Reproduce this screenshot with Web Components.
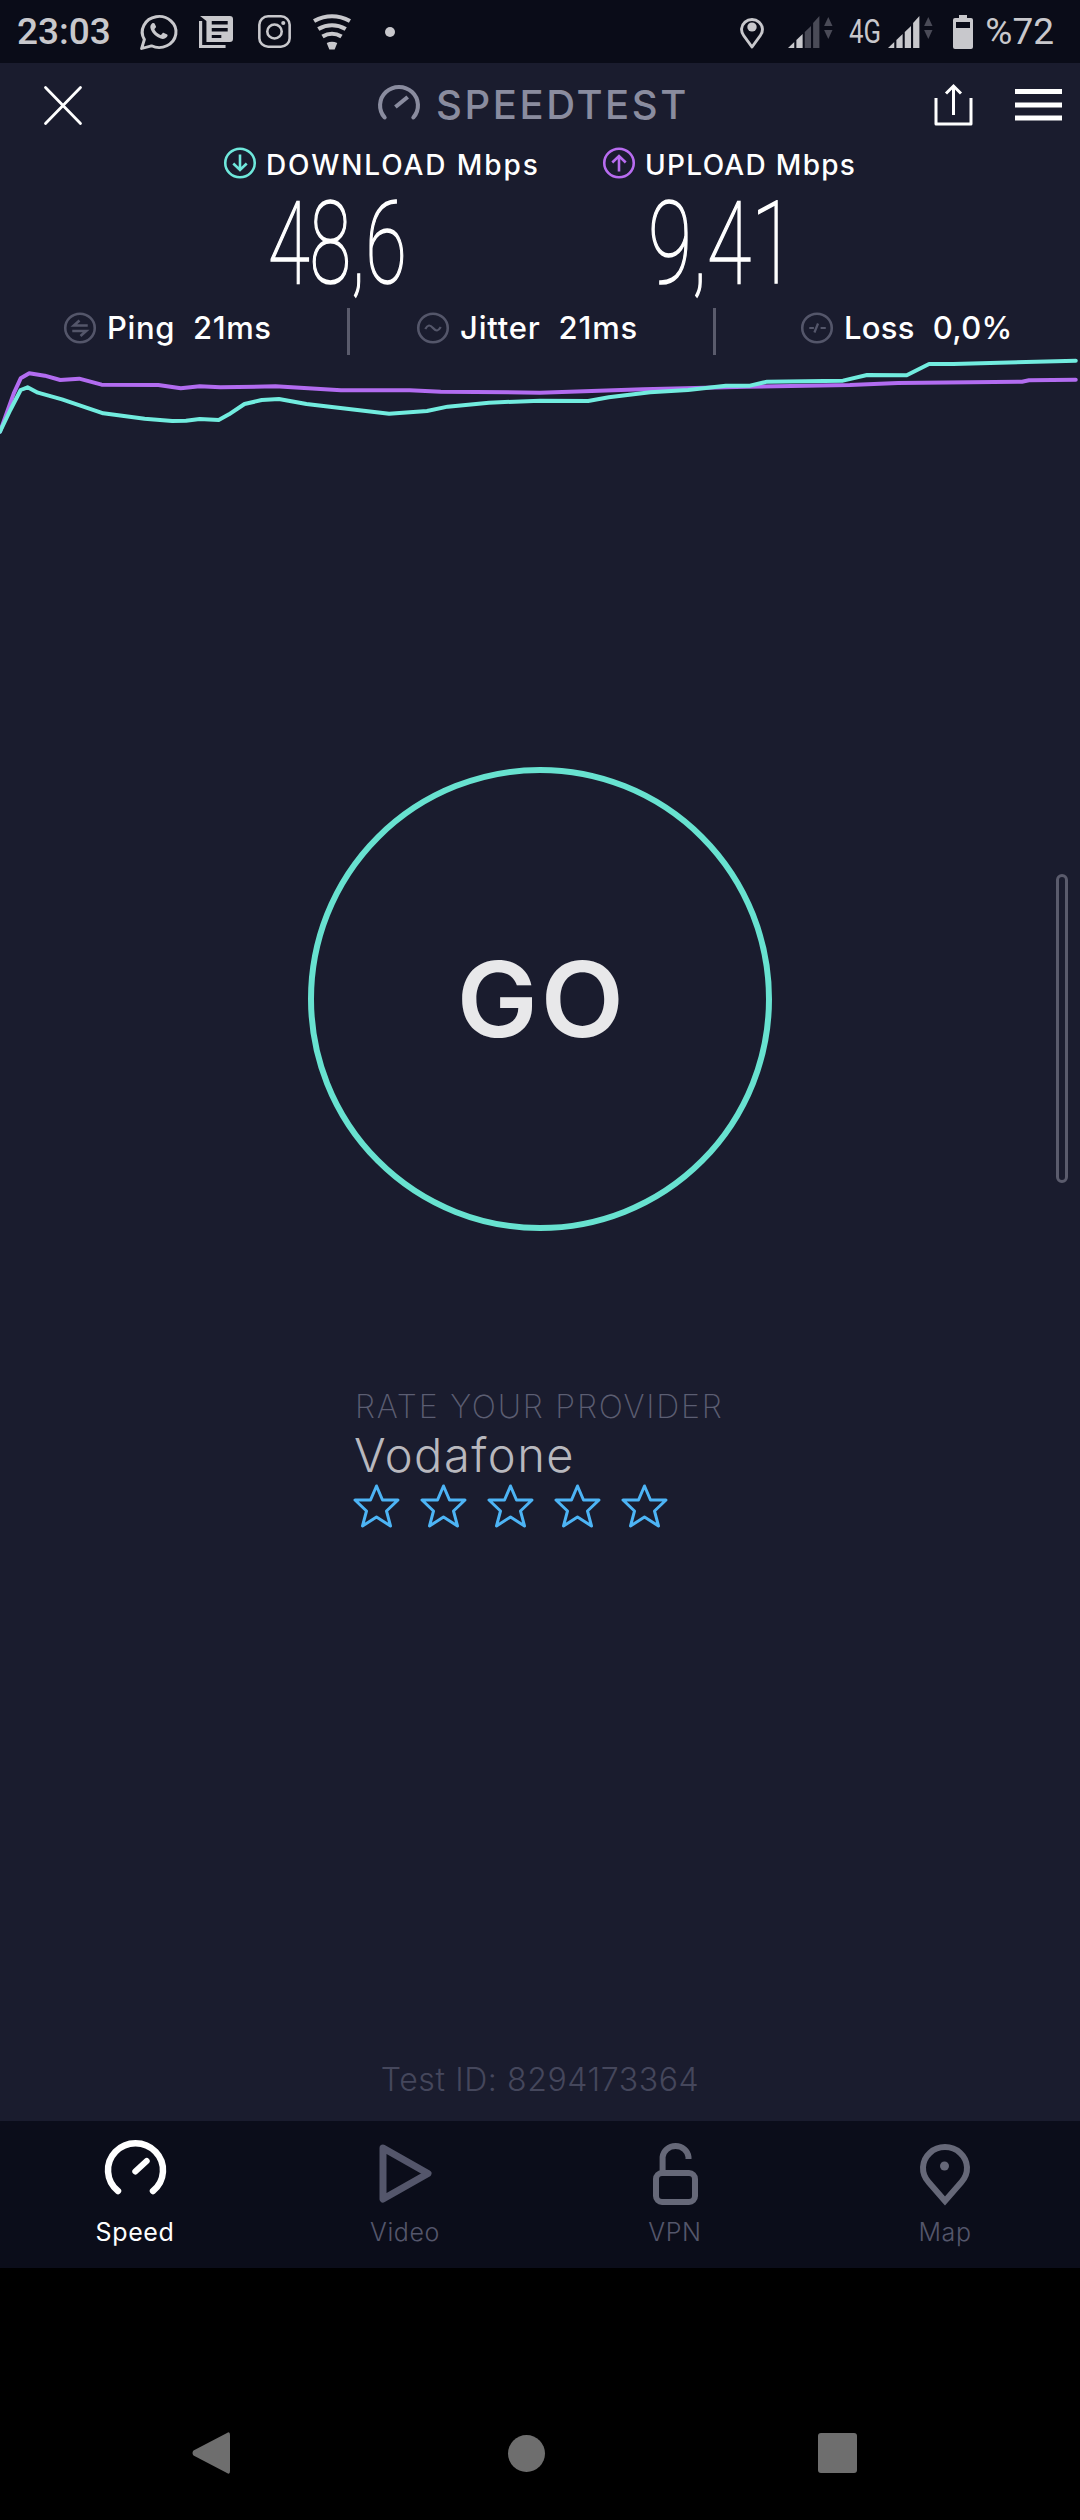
<!DOCTYPE html>
<html>
<head>
<meta charset="utf-8">
<style>
  html, body { margin: 0; background: #000; }
  body {
    width: 1080px;
    height: 2520px;
    overflow: hidden;
    position: relative;
    display: flex;
    flex-direction: column;
    font-family: Inter, "Open Sans", sans-serif;
    color: #fff;
  }
</style>
</head>
<body>
<st-status-bar></st-status-bar>
<st-main>
  <st-nav-header></st-nav-header>
  <st-results></st-results>
  <st-stats>
    <st-stat icon="ping" label="Ping" style="width:350px;padding-left:64px;letter-spacing:.6px">21ms</st-stat>
    <st-stat icon="jitter" label="Jitter" style="width:366px;padding-left:67px;letter-spacing:.8px">21ms</st-stat>
    <st-stat icon="loss" label="Loss" style="width:300px;padding-left:85px;letter-spacing:.3px">0,0%</st-stat>
  </st-stats>
  <st-chart></st-chart>
  <st-go>GO</st-go>
  <st-rating provider="Vodafone"></st-rating>
  <st-test-id>Test ID: 8294173364</st-test-id>
</st-main>
<st-tabbar>
  <st-tab icon="speed" active>Speed</st-tab>
  <st-tab icon="video">Video</st-tab>
  <st-tab icon="vpn">VPN</st-tab>
  <st-tab icon="map">Map</st-tab>
</st-tabbar>
<st-softkeys></st-softkeys>
<st-scroll-thumb></st-scroll-thumb>

<script>
const signal = (rest) => `
  <polygon points="0,33 6,27 6,33" fill="#c8c8cc"/>
  <polygon points="8,33 14,33 14,19 8,25" fill="#c8c8cc"/>
  <polygon points="16,33 22,33 22,11 16,17" fill="${rest}"/>
  <polygon points="24,33 30,33 30,1 24,8" fill="${rest}"/>
  <polygon points="34.500,11 38.500,2 42.500,11" fill="#4a4b57"/>
  <polygon points="34.500,15 42.500,15 38.500,24" fill="#4a4b57"/>`;

// [viewBox w, h, body, drawn width if it differs]
const ICONS = {
  whatsapp: [34, 36, `<path d="M1.500 34.500 L4 25.500 A15.500 15.500 0 1 1 10.500 31.800 Z" fill="none" stroke="#c8c8cc" stroke-width="2.800" stroke-linejoin="round"/>
    <path d="M11 9.500c-1.500 1.500-2 3.200-1 6 1.500 4 5 7.500 9 9 2.500 1 4.500 0 6-2 .5-1 .5-1.500 0-2l-3-1.500c-.5-.2-1-.2-1.300.2l-1.200 1.500c-.3.3-.7.3-1.100.1-2-1-4-2.800-5-5-.2-.4-.1-.7.1-1l1-1.200c.3-.3.3-.7.2-1l-1.300-3c-.3-.7-1.400-.9-2.400-.1z" fill="#c8c8cc"/>`, 37],
  news: [32, 33, `<path d="M1.500 6 V31.500 H25" fill="none" stroke="#c8c8cc" stroke-width="3"/>
    <path d="M1 1 H29 Q32 1 32 4 V24 Q32 27 29 27 H7 V6 Z" fill="#c8c8cc"/>
    <rect x="12" y="6" width="15" height="3.500" fill="#0a0c18"/>
    <rect x="12" y="13" width="15" height="3.500" fill="#0a0c18"/>
    <rect x="12" y="20" width="9" height="3" fill="#0a0c18"/>`, 34],
  instagram: [32, 33, `<rect x="1.300" y="1.300" width="29.400" height="30.400" rx="8.500" fill="none" stroke="#c8c8cc" stroke-width="2.500"/>
    <circle cx="16" cy="16.500" r="7" fill="none" stroke="#c8c8cc" stroke-width="2.500"/>
    <circle cx="24.500" cy="8" r="2" fill="#c8c8cc"/>`, 33],
  wifi: [36, 36, `<g fill="none" stroke="#c8c8cc" stroke-width="4"><path d="M1 7 Q18 -2.500 35 7"/><path d="M5 15 Q18 7.500 31 15"/><path d="M9 22.500 Q18 17 27 22.500"/></g>
    <path d="M13 29 Q18 26.500 23 29 L20.500 35.500 H15.500 Z" fill="#c8c8cc"/>`, 38],
  dot: [10, 10, `<circle cx="5" cy="5" r="5" fill="#c8c8cc"/>`],
  pin: [23, 34, `<path d="M11.500 32 L3.500 20.500 A10 10 0 1 1 19.500 20.500 Z" fill="none" stroke="#c8c8cc" stroke-width="2.800" stroke-linejoin="round"/><circle cx="11.500" cy="12" r="4.500" fill="#c8c8cc"/>`, 24],
  signal1: [43, 33, signal("#4a4b57"), 45],
  signal2: [43, 33, signal("#c8c8cc"), 45],
  battery: [20, 34, `<rect x="6" y="0" width="8" height="5" fill="#c8c8cc"/><rect x="0" y="3" width="20" height="31" rx="2" fill="#c8c8cc"/><rect x="3" y="7" width="14" height="6" fill="#0a0c18"/>`],
  close: [38, 39, `<path d="M1.500 1.500 L36.500 37.500 M36.500 1.500 L1.500 37.500" stroke="#fff" stroke-width="2.800" stroke-linecap="round"/>`],
  gauge: [41, 36, `<path d="M6.500 33.500 A18.500 18.500 0 1 1 34.500 33.500" fill="none" stroke="#8a8c9f" stroke-width="4" stroke-linecap="round"/><path d="M17 23 L29 13" stroke="#8a8c9f" stroke-width="4"/>`, 42],
  share: [40, 42, `<path d="M2 14 V40 H37 V14" fill="none" stroke="#fff" stroke-width="3" stroke-linejoin="round"/><path d="M19.500 31 V2 M12 9.500 L19.500 2 L27 9.500" fill="none" stroke="#fff" stroke-width="3"/>`],
  menu: [47, 32, `<rect y="0" width="47" height="5" fill="#fff"/><rect y="13.500" width="47" height="5" fill="#fff"/><rect y="26.500" width="47" height="5" fill="#fff"/>`],
  down: [31, 32, `<circle cx="15.500" cy="16" r="14.300" fill="none" stroke="#6fe8dc" stroke-width="2.500"/><path d="M15.500 7.500 V23 M9 16.500 L15.500 23 L22 16.500" fill="none" stroke="#6fe8dc" stroke-width="2.500"/>`, 32],
  up: [31, 32, `<circle cx="15.500" cy="16" r="14.300" fill="none" stroke="#b86cf0" stroke-width="2.500"/><path d="M15.500 24.500 V9 M9 15.500 L15.500 9 L22 15.500" fill="none" stroke="#b86cf0" stroke-width="2.500"/>`, 32],
  ping: [31, 32, `<circle cx="15.500" cy="16" r="14.300" fill="none" stroke="#54566a" stroke-width="2.500"/><path d="M23 13.500 H9.500 L15 8.500 M8 19 H21.500 L16 24" fill="none" stroke="#54566a" stroke-width="2.500"/>`, 32],
  jitter: [31, 32, `<circle cx="15.500" cy="16" r="14.300" fill="none" stroke="#54566a" stroke-width="2.500"/><path d="M8 17 C10.500 12.500 12.500 12.500 15.500 16 S20.500 19.500 23 15" fill="none" stroke="#54566a" stroke-width="2.200"/>`, 32],
  loss: [31, 32, `<circle cx="15.500" cy="16" r="14.300" fill="none" stroke="#54566a" stroke-width="2.500"/><path d="M8 16 H12.500 M13 20.500 L16.500 11.500 M19 16 H24" fill="none" stroke="#54566a" stroke-width="2.200"/>`, 32],
  star: [47, 44, `<path d="M23.500 2 L29.500 16 H45 L33.500 27 L37.500 42 L23.500 33 L9.500 42 L13.500 27 L2 16 H17.500 Z" fill="none" stroke="#4db4f5" stroke-width="3" stroke-linejoin="round"/>`],
  speed: [63, 55, `<path d="M14 51 A27.500 27 0 1 1 49 51" fill="none" stroke="#fff" stroke-width="6.500" stroke-linecap="round"/><path d="M31.300 31.500 L42.700 21" stroke="#fff" stroke-width="6" stroke-linecap="round"/>`],
  video: [53, 59, `<path d="M4 4 L49 29.500 L4 55 Z" fill="none" stroke="#54566b" stroke-width="7" stroke-linejoin="round"/>`],
  vpn: [45, 63, `<rect x="3" y="31" width="39" height="29" rx="6" fill="none" stroke="#666878" stroke-width="6"/><path d="M9.600 30 V15 A13 12 0 0 1 35.500 15 V17" fill="none" stroke="#666878" stroke-width="6"/>`],
  map: [50, 63, `<path d="M25 59 L8.500 40 A22 21 0 1 1 41.500 40 Z" fill="none" stroke="#666878" stroke-width="6"/><circle cx="24.500" cy="24" r="4.500" fill="#666878"/>`],
  back: [38, 42, `<path d="M35 1 Q38 -1 38 3 V39 Q38 43 35 41 L1.500 23.500 Q-.5 21 1.500 18.500 Z" fill="#6e6e6e"/>`],
  home: [37, 37, `<circle cx="18.500" cy="18.500" r="18.500" fill="#6e6e6e"/>`],
  recent: [39, 40, `<rect width="39" height="40" rx="3" fill="#6e6e6e"/>`],
};

class StIcon extends HTMLElement {
  constructor() {
    super();
    this.attachShadow({ mode: "open" });
  }

  connectedCallback() {
    const [w, h, body, drawn] = ICONS[this.getAttribute("name")];
    const width = drawn ?? w;
    this.shadowRoot.innerHTML = `
      <style>
        :host { display: block; flex: none; width: ${width}px; height: ${h}px; }
        svg { display: block; overflow: visible; }
      </style>
      <svg width="${width}" height="${h}" viewBox="0 0 ${w} ${h}" preserveAspectRatio="none">${body}</svg>`;
  }
}

class StStatusBar extends HTMLElement {
  constructor() {
    super();
    this.attachShadow({ mode: "open" });
    this.shadowRoot.innerHTML = `
      <style>
        :host {
          display: flex;
          align-items: center;
          flex: none;
          height: 63px;
          padding: 0 26px 0 17px;
          box-sizing: border-box;
          background: #0a0c18;
          color: #c8c8cc;
          font: 500 37px/36px Roboto, sans-serif;
        }
        .time { width: 122.500px; }
        .narrow { width: 32px; margin: 0 7.500px 0 16px; font-size: 33px; transform: scaleX(.78); transform-origin: left; font-weight: 400; }
        .pct { margin-left: 12px; font-weight: 400; }
      </style>
      <span class="time">23:03</span>
      <st-icon name="whatsapp" style="margin-right:22.500px"></st-icon>
      <st-icon name="news" style="margin-right:24.500px"></st-icon>
      <st-icon name="instagram" style="margin-right:22px"></st-icon>
      <st-icon name="wifi" style="margin-right:34px"></st-icon>
      <st-icon name="dot" style="margin-right:auto"></st-icon>
      <st-icon name="pin" style="margin-right:23.500px"></st-icon>
      <st-icon name="signal1"></st-icon>
      <span class="narrow">4G</span>
      <st-icon name="signal2" style="margin-right:20px"></st-icon>
      <st-icon name="battery"></st-icon>
      <span class="pct">%72</span>`;
  }
}

class StMain extends HTMLElement {
  constructor() {
    super();
    this.attachShadow({ mode: "open" });
    this.shadowRoot.innerHTML = `
      <style>
        :host { display: flex; flex-direction: column; flex: 1; min-height: 0; background: #1a1c2e; }
      </style>
      <slot></slot>`;
  }
}

class StNavHeader extends HTMLElement {
  constructor() {
    super();
    this.attachShadow({ mode: "open" });
    this.shadowRoot.innerHTML = `
      <style>
        :host {
          display: flex;
          align-items: center;
          height: 84px;
          padding: 0 18px 0 44px;
          box-sizing: border-box;
        }
        .title {
          margin-left: 16px;
          font-size: 40px;
          font-weight: 500;
          line-height: 40px;
          color: #8a8c9f;
          letter-spacing: 2.600px;
        }
      </style>
      <st-icon name="close"></st-icon>
      <st-icon name="gauge" style="margin:0 0 6px 296px"></st-icon>
      <span class="title">SPEEDTEST</span>
      <st-icon name="share" style="margin-left:auto"></st-icon>
      <st-icon name="menu" style="margin-left:41px"></st-icon>`;
  }
}

class StResults extends HTMLElement {
  constructor() {
    super();
    this.attachShadow({ mode: "open" });
    this.shadowRoot.innerHTML = `
      <style>
        :host { display: block; }
        .labels { display: flex; align-items: center; height: 32px; padding-left: 224px; }
        .label { font-size: 28px; line-height: 28px; font-weight: 500; letter-spacing: 1.300px; margin: 4px 0 0 10px; white-space: nowrap; }
        .values { display: flex; height: 129px; padding-left: 268px; }
        .value {
          flex: none;
          width: 380px;
          font: 100 115px/129px Roboto, sans-serif;
          -webkit-text-stroke: 1.500px #fff;
          transform: scaleX(.66);
          transform-origin: left;
          white-space: nowrap;
        }
      </style>
      <div class="labels">
        <st-icon name="down"></st-icon>
        <span class="label" style="width:337px;letter-spacing:1.900px">DOWNLOAD Mbps</span>
        <st-icon name="up"></st-icon>
        <span class="label">UPLOAD Mbps</span>
      </div>
      <div class="values">
        <span class="value">48,6</span>
        <span class="value" style="transform:scaleX(.7)">9,41</span>
      </div>`;
  }
}

class StStats extends HTMLElement {
  constructor() {
    super();
    this.attachShadow({ mode: "open" });
    this.shadowRoot.innerHTML = `
      <style>
        :host { display: flex; height: 47px; position: relative; }
      </style>
      <slot></slot>`;
  }
}

class StStat extends HTMLElement {
  constructor() {
    super();
    this.attachShadow({ mode: "open" });
  }

  connectedCallback() {
    this.shadowRoot.innerHTML = `
      <style>
        :host {
          display: flex;
          align-items: center;
          box-sizing: border-box;
          height: 47px;
          padding-bottom: 7px;
          border-right: 3px solid #5a5b6c;
          font-size: 31px;
          font-weight: 500;
          line-height: 36px;
          white-space: nowrap;
        }
        :host(:last-child) { border-right: 0; }
        .label { margin: 0 18px 0 11px; }
      </style>
      <st-icon name="${this.getAttribute("icon")}"></st-icon>
      <span class="label">${this.getAttribute("label")}</span>
      <slot></slot>`;
  }
}

// points read off the reference, as offsets in a crop drawn at 2.904x
const PURPLE = [[0,905],[40,790],[60,745],[85,730],[130,737],[175,750],[230,746],[295,764],[460,765],[525,775],[580,769],[640,772],[800,769],[990,781],[1190,781],[1280,785],[1568,788],[1868,778],[2168,770],[2468,765],[2608,759],[2968,755],[2988,751],[3124,749]];
const CYAN = [[0,905],[30,840],[60,780],[80,772],[110,788],[180,808],[300,850],[420,866],[500,873],[540,872],[580,867],[635,870],[665,853],[710,822],[760,810],[810,807],[890,822],[1130,851],[1240,843],[1300,830],[1420,818],[1568,812],[1708,813],[1768,802],[1888,787],[1998,780],[2108,767],[2178,767],[2228,755],[2448,752],[2518,735],[2633,736],[2698,702],[2768,702],[3124,692]];

class StChart extends HTMLElement {
  constructor() {
    super();
    this.attachShadow({ mode: "open" });
    const pts = (list) => list.map(([x, y]) => `${x / 2.904},${y / 3 + 130 - 355}`).join(" ");
    this.shadowRoot.innerHTML = `
      <style>
        :host { display: block; height: 90px; }
        svg { display: block; }
        polyline { fill: none; stroke-width: 4; stroke-linejoin: round; stroke-linecap: round; }
      </style>
      <svg width="1080" height="90" viewBox="0 0 1080 90">
        <polyline points="${pts(PURPLE)}" stroke="#b26cf0"/>
        <polyline points="${pts(CYAN)}" stroke="#72ecdf"/>
      </svg>`;
  }
}

class StGo extends HTMLElement {
  constructor() {
    super();
    this.attachShadow({ mode: "open" });
    this.shadowRoot.innerHTML = `
      <style>
        :host {
          display: flex;
          align-items: center;
          justify-content: center;
          align-self: center;
          box-sizing: border-box;
          width: 464px;
          height: 464px;
          margin-top: 322px;
          padding-left: 3px;
          border: 6px solid #68e2d0;
          border-radius: 50%;
          color: #e8e8ea;
          font-size: 104px;
          font-weight: 600;
          letter-spacing: 3px;
          line-height: 1;
        }
        span { display: block; transform: scaleX(1.04); }
      </style>
      <span><slot></slot></span>`;
  }
}

class StRating extends HTMLElement {
  constructor() {
    super();
    this.attachShadow({ mode: "open" });
  }

  connectedCallback() {
    const stars = '<st-icon name="star"></st-icon>'.repeat(5);
    this.shadowRoot.innerHTML = `
      <style>
        :host { display: block; margin-top: 159.500px; padding-left: 353px; }
        .title { padding-left: 2px; font-size: 32px; font-weight: 200; letter-spacing: 1.800px; line-height: 32px; color: #5c5e72; }
        .provider { margin-top: 8.500px; padding-left: 1px; font-size: 47px; font-weight: 300; letter-spacing: 1.500px; line-height: 47px; color: #b8b8be; }
        .stars { display: flex; gap: 20px; margin-top: 6px; }
      </style>
      <div class="title">RATE YOUR PROVIDER</div>
      <div class="provider">${this.getAttribute("provider")}</div>
      <div class="stars">${stars}</div>`;
  }
}

class StTestId extends HTMLElement {
  constructor() {
    super();
    this.attachShadow({ mode: "open" });
    this.shadowRoot.innerHTML = `
      <style>
        :host {
          display: block;
          margin-top: auto;
          padding-bottom: 21px;
          text-align: center;
          color: #45475c;
          font-size: 32px;
          font-weight: 300;
          letter-spacing: .6px;
          line-height: 40px;
        }
      </style>
      <slot></slot>`;
  }
}

class StTabbar extends HTMLElement {
  constructor() {
    super();
    this.attachShadow({ mode: "open" });
    this.shadowRoot.innerHTML = `
      <style>
        :host {
          display: grid;
          grid-template-columns: repeat(4, 270px);
          flex: none;
          height: 147px;
          padding-top: 19px;
          box-sizing: border-box;
          background: #0b0d1a;
        }
      </style>
      <slot></slot>`;
  }
}

class StTab extends HTMLElement {
  constructor() {
    super();
    this.attachShadow({ mode: "open" });
  }

  connectedCallback() {
    const active = this.hasAttribute("active");
    this.shadowRoot.innerHTML = `
      <style>
        :host {
          display: flex;
          flex-direction: column;
          align-items: center;
          color: ${active ? "#fff" : "#54566b"};
          font-size: 25px;
          font-weight: ${active ? 400 : 300};
          letter-spacing: .6px;
          line-height: 30px;
        }
        .icon { display: flex; align-items: center; height: 67px; margin-bottom: 10px; }
      </style>
      <div class="icon"><st-icon name="${this.getAttribute("icon")}" style="${active ? "margin-bottom:12px" : ""}"></st-icon></div>
      <slot></slot>`;
  }
}

class StSoftkeys extends HTMLElement {
  constructor() {
    super();
    this.attachShadow({ mode: "open" });
    this.shadowRoot.innerHTML = `
      <style>
        :host {
          display: flex;
          align-items: center;
          flex: none;
          height: 252px;
          padding: 118px 0 0 192px;
          box-sizing: border-box;
          background: #000;
        }
      </style>
      <st-icon name="back"></st-icon>
      <st-icon name="home" style="margin-left:278px"></st-icon>
      <st-icon name="recent" style="margin-left:273px"></st-icon>`;
  }
}

class StScrollThumb extends HTMLElement {
  constructor() {
    super();
    this.attachShadow({ mode: "open" });
    this.shadowRoot.innerHTML = `
      <style>
        :host {
          position: absolute;
          left: 1056px;
          top: 874px;
          width: 12px;
          height: 309px;
          box-sizing: border-box;
          border: 3px solid #5a5b6c;
          border-radius: 6px;
        }
      </style>`;
  }
}

customElements.define("st-icon", StIcon);
customElements.define("st-status-bar", StStatusBar);
customElements.define("st-main", StMain);
customElements.define("st-nav-header", StNavHeader);
customElements.define("st-results", StResults);
customElements.define("st-stats", StStats);
customElements.define("st-stat", StStat);
customElements.define("st-chart", StChart);
customElements.define("st-go", StGo);
customElements.define("st-rating", StRating);
customElements.define("st-test-id", StTestId);
customElements.define("st-tabbar", StTabbar);
customElements.define("st-tab", StTab);
customElements.define("st-softkeys", StSoftkeys);
customElements.define("st-scroll-thumb", StScrollThumb);
</script>
</body>
</html>
